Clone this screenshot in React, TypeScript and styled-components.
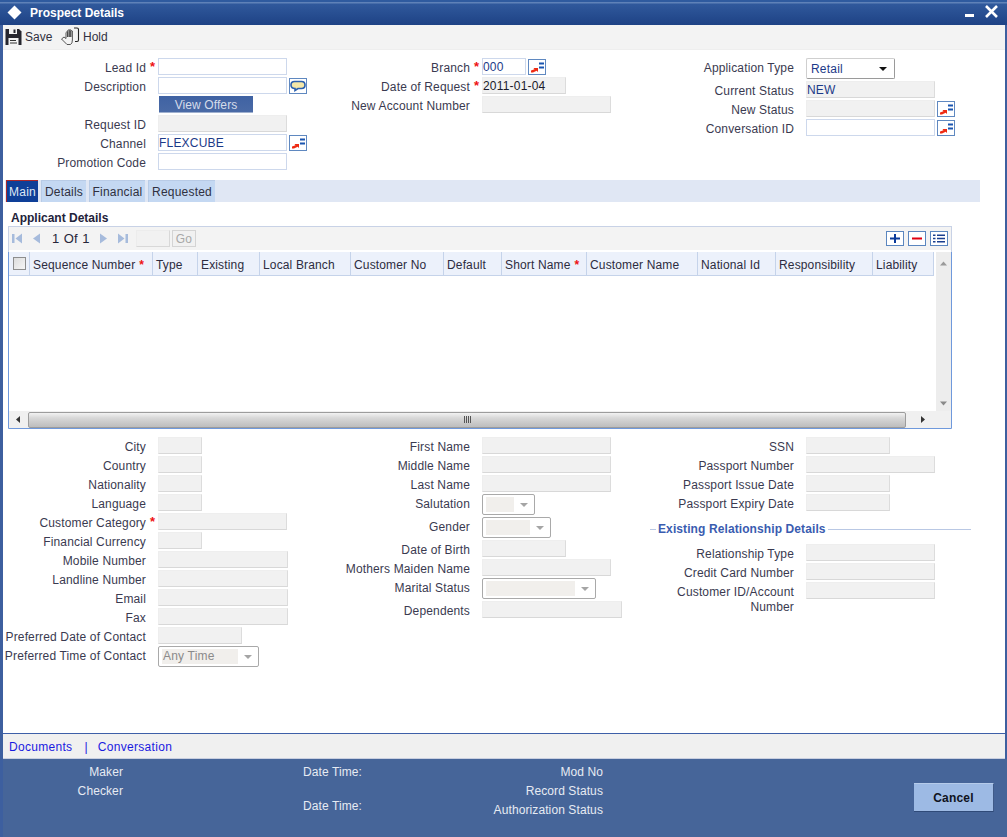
import React from "react";
import styled, { createGlobalStyle } from "styled-components";

const Global = createGlobalStyle`
  html, body { margin: 0; padding: 0; background: #fff; }
  body { font-family: "Liberation Sans", Arial, sans-serif; font-size: 12px; color: #33334a; }
  * { box-sizing: border-box; }
`;

const Frame = styled.div`
  width: 1007px; height: 837px; display: flex; flex-direction: column; overflow: hidden;
  background: #fff;
`;
const TitleBar = styled.header`
  height: 25px; flex: none; display: flex; align-items: center; padding: 0 8px 0 7px;
  background: linear-gradient(#2f5b9f 0, #2f5b9f 2px, #5f82b8 2px, #5f82b8 3px, #30599c 4px, #1e4285 100%);
  color: #fff; font-weight: bold; font-size: 12px; gap: 8px;
`;
const TitleText = styled.span`flex: 1; padding-top: 1px;`;
const Body = styled.div`
  flex: 1; display: flex; flex-direction: column; min-height: 0;
  border-left: 3px solid #3d5f9f; border-right: 2px solid #3d5f9f;
`;
const Toolbar = styled.div`
  height: 25px; flex: none; display: flex; align-items: center; background: #f3f3f3;
  border-bottom: 1px solid #eeeeee; padding-left: 2px; font-size: 12px; color: #303040;
`;
const ToolButton = styled.span<{ $w: number }>`
  display: flex; align-items: center; gap: 3px; width: ${p => p.$w}px;
`;
const FormGrid = styled.div<{ $top: number; $h?: number }>`
  display: grid; grid-template-columns: 323px 324px 1fr; padding-top: ${p => p.$top}px;
  ${p => (p.$h ? `height: ${p.$h}px;` : "")} flex: none;
`;
const Col = styled.div`display: flex; flex-direction: column;`;
const Row = styled.div<{ $h?: number }>`
  display: flex; align-items: flex-start; height: ${p => p.$h ?? 19}px; flex: none;
`;
const Label = styled.label<{ $w: number }>`
  width: ${p => p.$w}px; flex: none; text-align: right; line-height: 17px; white-space: nowrap; padding-top: 2px;
  color: #3a3a50; letter-spacing: 0.15px;
`;
const WrapLabel = styled(Label)`white-space: normal; line-height: 15px; padding-top: 3px;`;
const Star = styled.span<{ $w: number }>`
  width: ${p => p.$w}px; flex: none; color: #ee1111; text-align: left; padding-left: 4px;
  font-size: 13px; font-weight: bold; line-height: 18px;
`;
const Field = styled.input<{ $w: number; $off?: boolean; $dark?: boolean }>`
  width: ${p => p.$w}px; height: 17px; flex: none; margin: 0; padding: 0; outline: none;
  font: 12px "Liberation Sans", Arial, sans-serif; letter-spacing: 0.2px;
  color: ${p => (p.$dark ? "#1a1a2a" : "#1c3a88")};
  background: ${p => (p.$off ? "#f1f1f1" : "#fff")};
  border: 1px solid ${p => (p.$off ? "#eeeeee" : "#cdd8ec")};
  ${p => (p.$off ? "border-right-color: #dcdcdc; border-bottom-color: #d8d8d8;" : "")}
`;
const OfferButton = styled.button`
  width: 94px; height: 17px; margin: 0 0 0 1px; padding: 1px 0 0; border: 0; border-bottom: 1px solid #9fb0cf;
  background: linear-gradient(#3f62a3, #4a6aa6); color: #d5dcea; font: 12px "Liberation Sans", Arial, sans-serif;
  letter-spacing: 0.1px;
`;
const SideButton = styled.button`
  width: 18px; height: 16px; margin: 1px 0 0 2px; padding: 0; display: flex; align-items: center; justify-content: center;
  background: #fff; border: 1px solid #5f88c0;
`;
const SelectBox = styled.div<{ $w: number; $live?: boolean }>`
  width: ${p => p.$w}px; height: 21px; flex: none; display: flex; align-items: center; padding: 2px 0 2px ${p => (p.$live ? 4 : 3)}px;
  border: 1px solid ${p => (p.$live ? "#cfcfcf" : "#a9a9a9")}; border-radius: 2px; background: #fff;
  ${p => (p.$live ? "border-right-color:#9a9a9a; border-bottom-color:#9a9a9a; color:#1c3a88;" : "")}
  letter-spacing: 0.2px;
`;
const SelectFill = styled.div`
  flex: 1; height: 15px; background: #f1efec; color: #8a8a8a; line-height: 15px; padding-left: 1px;
`;
const SelectText = styled.div`flex: 1; line-height: 15px; padding-top: 2px;`;
const Caret = styled.i<{ $dark?: boolean }>`
  width: 0; height: 0; margin: 0 ${p => (p.$dark ? 7 : 6)}px 0 ${p => (p.$dark ? 0 : 6)}px;
  border-left: 4px solid transparent; border-right: 4px solid transparent;
  border-top: 4px solid ${p => (p.$dark ? "#111" : "#a5a5a5")};
`;
const TabStrip = styled.nav`
  flex: none; height: 22px; margin: 1px 0 0 2px; width: 975px; display: flex; gap: 3px; background: #e0e7f4;
  padding-left: 1px;
`;
const Tab = styled.a<{ $w: number; $active?: boolean }>`
  width: ${p => p.$w}px; height: 22px; display: block; text-align: center; line-height: 22px; letter-spacing: 0.2px;
  background: ${p => (p.$active ? "#0e3f98" : "#c4d8f2")};
  color: ${p => (p.$active ? "#dfe8f5" : "#2f3040")};
  border-top: 1px solid ${p => (p.$active ? "#a8282c" : "#b8cbe6")};
  border-left: 1px solid ${p => (p.$active ? "#a8282c" : "#b8cbe6")};
`;
const SectionTitle = styled.h3`
  margin: 9px 0 0 8px; height: 14px; font-size: 12px; line-height: 15px; font-weight: bold; color: #22223a; flex: none;
`;
const Panel = styled.section`
  margin: 1px 0 0 5px; width: 944px; flex: none; display: flex; flex-direction: column;
  border: 1px solid #c8d2e6; border-bottom: 1px solid #6f99dc;
`;
const PagerBar = styled.div`
  height: 23px; flex: none; background: #f3f3f3; display: flex; align-items: center; padding-left: 2px; margin-bottom: 2px;
`;
const PagerIcon = styled.span<{ $ml?: number }>`
  display: flex; margin-left: ${p => p.$ml ?? 0}px;
`;
const PagerText = styled.span`
  width: 37px; margin-left: 9px; font-size: 13px; word-spacing: 1px; color: #26263a; white-space: nowrap;
`;
const PagerInput = styled.input`
  width: 34px; height: 17px; margin: 0 2px 0 7px; padding: 0; background: #f1f1f1; border: 1px solid #ececec;
  border-bottom-color: #d8d8d8; border-right-color: #d8d8d8;
`;
const GoButton = styled.button`
  width: 24px; height: 17px; padding: 0; background: #f1f1f1; border: 1px solid #d4d4d4; color: #a8a8a8;
  font: 12px "Liberation Sans", Arial, sans-serif; letter-spacing: 0.2px;
`;
const PagerActions = styled.div`margin-left: auto; display: flex; gap: 4px; padding-right: 3px;`;
const ActionButton = styled.button`
  width: 18px; height: 15px; padding: 0; display: flex; align-items: center; justify-content: center;
  background: #fff; border: 1px solid #5b86bf;
`;
const GridArea = styled.div`
  display: flex; height: 159px; flex: none; margin: 0 -1px; border-right: 1px solid #6f99dc; border-left: 1px solid #6f99dc;
`;
const GridMain = styled.div`flex: 1; min-width: 0; background: #fff;`;
const HeaderRow = styled.div`
  display: flex; height: 24px; width: 925px; background: #ecf1fb; border-bottom: 1px solid #c5d3ea;
`;
const HeaderCell = styled.div<{ $w: number }>`
  width: ${p => p.$w}px; flex: none; padding-left: 3px; line-height: 26px; white-space: nowrap; letter-spacing: 0.15px;
  border-right: 1px solid #c5d3ea; color: #2c2c40;
`;
const CheckCell = styled.div`
  width: 21px; flex: none; display: flex; align-items: center; justify-content: center; border-right: 1px solid #c5d3ea;
`;
const CheckBox = styled.input`
  width: 13px; height: 13px; margin: 0; appearance: none; background: linear-gradient(135deg, #dcdcdc, #f6f6f6);
  border: 1px solid #8d8d8d;
`;
const HeaderStar = styled.span`color: #ee1111; font-weight: bold; margin-left: 4px;`;
const VScroll = styled.div`
  width: 15px; flex: none; background: #ededed; display: flex; flex-direction: column; justify-content: space-between;
  align-items: center; padding: 8px 0 4px;
`;
const HScroll = styled.div`
  height: 17px; flex: none; margin: 0 -1px; background: #f0f0f0; display: flex; align-items: center;
  border-left: 1px solid #6f99dc; border-right: 1px solid #6f99dc;
`;
const HLeft = styled.div`width: 19px; flex: none; display: flex; justify-content: center;`;
const HThumb = styled.div`
  width: 878px; height: 16px; flex: none; display: flex; align-items: center; justify-content: center; gap: 1px;
  background: linear-gradient(#f2f2f2, #d8d8d8 35%, #bdbdbd 100%); border: 1px solid #9c9c9c; border-radius: 2px;
`;
const Grip = styled.i`width: 1px; height: 7px; background: #555;`;
const HRight = styled.div`flex: 1; display: flex; justify-content: flex-end; padding-right: 25px;`;
const Spacer = styled.div`flex: 1;`;
const LegendRow = styled.div`
  width: 321px; height: 22px; margin: 5px 0 4px; display: flex; align-items: center; gap: 2px; flex: none;
`;
const LegendLine = styled.i<{ $grow?: boolean }>`
  height: 1px; background: #b9c8e4; ${p => (p.$grow ? "flex: 1;" : "width: 6px;")}
`;
const LegendText = styled.span`
  color: #3a5cb0; font-weight: bold; letter-spacing: 0.1px;
`;
const LinkBar = styled.div`
  height: 26px; flex: none; background: #f0f0f0; border-top: 1px solid #3d5fa8; border-bottom: 1px solid #c9cfe0;
  display: flex; align-items: center; padding: 1px 0 0 6px; color: #1a1ae0; letter-spacing: 0.3px;
`;
const FooterLink = styled.a``;
const LinkSep = styled.span`margin: 0 10px 0 12px;`;
const Footer = styled.footer`
  height: 78px; flex: none; background: #466599; color: #e6ebf3; display: flex; border-left: 3px solid #3d5f9f; letter-spacing: 0.1px;
`;
const AuditCol = styled.div<{ $w: number; $ml: number; $right?: boolean }>`
  width: ${p => p.$w}px; margin-left: ${p => p.$ml}px; padding-top: 4px; display: flex; flex-direction: column;
  ${p => (p.$right ? "text-align: right;" : "")}
`;
const AuditItem = styled.div<{ $mt?: number }>`height: 19px; line-height: 19px; margin-top: ${p => p.$mt ?? 0}px;`;
const CancelButton = styled.button`
  width: 80px; height: 29px; margin: 24px 0 0 311px; padding: 0; border: 0; background: #9dbae4; color: #0f1320;
  font: bold 12px "Liberation Sans", Arial, sans-serif; border-top: 1px solid #b5cbea; border-bottom: 1px solid #2f4a78; border-right: 1px solid #3f5a88;
  letter-spacing: 0.2px;
`;

const Lov = () => (
  <svg width="16" height="14" viewBox="0 0 16 14">
    <path d="M2 12.5 V10.5 L5.5 9.3 L4.5 8 H9 V12 L7.7 10.8 L4 12.5 Z" fill="#ee2a12" />
    <rect x="10" y="2.5" width="5" height="2" fill="#1a55b0" />
    <rect x="10" y="6.5" width="5" height="2" fill="#1a55b0" />
  </svg>
);
const Bubble = () => (
  <svg width="16" height="14" viewBox="0 0 16 14">
    <path d="M4.5 2.5 H11.5 Q15 2.5 15 6 Q15 9.5 11.5 9.5 H8 L5 11.5 V9.5 Q1 9.5 1 6 Q1 2.5 4.5 2.5 Z" fill="#f4e7a8" stroke="#2a5fae" strokeWidth="1.6" />
  </svg>
);
const Floppy = () => (
  <svg width="17" height="18" viewBox="0 0 17 18">
    <path d="M0.5 1 H14 L16.5 3.5 V17 H0.5 Z" fill="#26262e" />
    <rect x="4" y="1" width="8" height="5" fill="#f3f3f3" />
    <rect x="8.5" y="1.5" width="2" height="3.5" fill="#26262e" />
    <rect x="3.5" y="10" width="10" height="7" fill="#f3f3f3" />
    <rect x="5" y="12" width="6" height="1" fill="#333" />
    <rect x="5" y="14.5" width="7" height="1" fill="#333" />
  </svg>
);
const HandIcon = () => (
  <svg width="19" height="20" viewBox="0 0 19 20" fill="none" stroke="#444" strokeWidth="0.9" strokeLinejoin="round">
    <path d="M0.5 12 L3 10 L5 11.5 V5.5 Q5.7 4.3 6.6 5.5 V10 V3.5 Q7.3 2.3 8.2 3.5 V10 V3 Q9 1.8 9.8 3 V10 V4 Q10.5 3 11.4 4 V13 Q11.4 16.5 9.5 17.5 H6 L0.5 12 Z" />
    <path d="M13 1 H16 Q17.5 1 17.5 2.5 V13 Q17.5 14.5 16 14.5 H14" strokeWidth="1.1" stroke="#222" />
  </svg>
);
const Pager = ({ d }: { d: string }) => (
  <svg width="13" height="13" viewBox="0 0 13 13"><path d={d} fill="#a6bbdc" /></svg>
);
const Arrow = ({ d, c }: { d: string; c: string }) => (
  <svg width="7" height="7" viewBox="0 0 7 7"><path d={d} fill={c} /></svg>
);

type F = {
  label: string; wrap?: boolean; star?: boolean; w?: number; off?: boolean; dark?: boolean; value?: string;
  lov?: boolean; bubble?: boolean; offers?: boolean; select?: number; selectText?: string; live?: boolean;
};

const Line = ({ f, lw, sw }: { f: F; lw: number; sw: number }) => {
  const L = f.wrap ? WrapLabel : Label;
  return (
    <Row $h={f.select ? 23 : f.wrap ? 34 : 19}>
      <L $w={lw}>{f.label}</L>
      <Star $w={sw}>{f.star ? "*" : ""}</Star>
      {f.offers && <OfferButton>View Offers</OfferButton>}
      {f.select && f.live && (
        <SelectBox $w={f.select} $live>
          <SelectText>{f.selectText}</SelectText>
          <Caret $dark />
        </SelectBox>
      )}
      {f.select && !f.live && (
        <SelectBox $w={f.select}>
          <SelectFill>{f.selectText}</SelectFill>
          <Caret />
        </SelectBox>
      )}
      {f.w && <Field $w={f.w} $off={f.off} $dark={f.dark} value={f.value ?? ""} readOnly />}
      {f.lov && <SideButton><Lov /></SideButton>}
      {f.bubble && <SideButton><Bubble /></SideButton>}
    </Row>
  );
};

const topLeft: F[] = [
  { label: "Lead Id", star: true, w: 129 },
  { label: "Description", w: 129, bubble: true },
  { label: "", offers: true },
  { label: "Request ID", w: 129, off: true },
  { label: "Channel", w: 129, value: "FLEXCUBE", lov: true },
  { label: "Promotion Code", w: 129 },
];
const topMid: F[] = [
  { label: "Branch", star: true, w: 44, value: "000", lov: true },
  { label: "Date of Request", star: true, w: 84, off: true, dark: true, value: "2011-01-04" },
  { label: "New Account Number", w: 129, off: true },
];
const topRight: F[] = [
  { label: "Application Type", select: 89, live: true, selectText: "Retail" },
  { label: "Current Status", w: 129, off: true, value: "NEW" },
  { label: "New Status", w: 129, off: true, lov: true },
  { label: "Conversation ID", w: 129, lov: true },
];
const lowLeft: F[] = [
  { label: "City", w: 44, off: true },
  { label: "Country", w: 44, off: true },
  { label: "Nationality", w: 44, off: true },
  { label: "Language", w: 44, off: true },
  { label: "Customer Category", star: true, w: 129, off: true },
  { label: "Financial Currency", w: 44, off: true },
  { label: "Mobile Number", w: 130, off: true },
  { label: "Landline Number", w: 130, off: true },
  { label: "Email", w: 130, off: true },
  { label: "Fax", w: 130, off: true },
  { label: "Preferred Date of Contact", w: 84, off: true },
  { label: "Preferred Time of Contact", select: 101, selectText: "Any Time" },
];
const lowMid: F[] = [
  { label: "First Name", w: 129, off: true },
  { label: "Middle Name", w: 129, off: true },
  { label: "Last Name", w: 129, off: true },
  { label: "Salutation", select: 53 },
  { label: "Gender", select: 69 },
  { label: "Date of Birth", w: 84, off: true },
  { label: "Mothers Maiden Name", w: 129, off: true },
  { label: "Marital Status", select: 114 },
  { label: "Dependents", w: 140, off: true },
];
const lowRightA: F[] = [
  { label: "SSN", w: 84, off: true },
  { label: "Passport Number", w: 129, off: true },
  { label: "Passport Issue Date", w: 84, off: true },
  { label: "Passport Expiry Date", w: 84, off: true },
];
const lowRightB: F[] = [
  { label: "Relationship Type", w: 129, off: true },
  { label: "Credit Card Number", w: 129, off: true },
  { label: "Customer ID/Account Number", w: 129, off: true, wrap: true },
];

const columns: { t: string; w: number; star?: boolean }[] = [
  { t: "Sequence Number", w: 123, star: true },
  { t: "Type", w: 45 },
  { t: "Existing", w: 62 },
  { t: "Local Branch", w: 91 },
  { t: "Customer No", w: 93 },
  { t: "Default", w: 58 },
  { t: "Short Name", w: 85, star: true },
  { t: "Customer Name", w: 111 },
  { t: "National Id", w: 78 },
  { t: "Responsibility", w: 97 },
  { t: "Liability", w: 61 },
];

export default function App() {
  return (
    <Frame>
      <Global />
      <TitleBar>
        <svg width="15" height="15" viewBox="0 0 15 15"><path d="M7.5 0.5 L14.5 7.5 L7.5 14.5 L0.5 7.5 Z" fill="#fff" /></svg>
        <TitleText>Prospect Details</TitleText>
        <svg width="34" height="18" viewBox="0 0 34 18">
          <rect x="0" y="10" width="9" height="3" fill="#fff" />
          <path d="M21 2 L32 13 M32 2 L21 13" stroke="#fff" strokeWidth="2.6" />
        </svg>
      </TitleBar>
      <Body>
        <Toolbar>
          <ToolButton $w={56}><Floppy />Save</ToolButton>
          <ToolButton $w={60}><HandIcon />Hold</ToolButton>
        </Toolbar>
        <FormGrid $top={8} $h={129}>
          <Col>{topLeft.map((f, i) => <Line key={i} f={f} lw={143} sw={12} />)}</Col>
          <Col>{topMid.map((f, i) => <Line key={i} f={f} lw={144} sw={12} />)}</Col>
          <Col>{topRight.map((f, i) => <Line key={i} f={f} lw={144} sw={12} />)}</Col>
        </FormGrid>
        <TabStrip>
          <Tab $w={32} $active>Main</Tab>
          <Tab $w={45}>Details</Tab>
          <Tab $w={56}>Financial</Tab>
          <Tab $w={67}>Requested</Tab>
        </TabStrip>
        <SectionTitle>Applicant Details</SectionTitle>
        <Panel>
          <PagerBar>
            <PagerIcon><Pager d="M1 2 H3.5 V11 H1 Z M11 1.5 V11.5 L4.5 6.5 Z" /></PagerIcon>
            <PagerIcon $ml={6}><Pager d="M10 1.5 V11.5 L3 6.5 Z" /></PagerIcon>
            <PagerText>1 Of 1</PagerText>
            <PagerIcon $ml={8}><Pager d="M3 1.5 V11.5 L10 6.5 Z" /></PagerIcon>
            <PagerIcon $ml={6}><Pager d="M2 1.5 V11.5 L8.5 6.5 Z M9.5 2 H12 V11 H9.5 Z" /></PagerIcon>
            <PagerInput readOnly />
            <GoButton>Go</GoButton>
            <PagerActions>
              <ActionButton>
                <svg width="12" height="11" viewBox="0 0 12 11"><path d="M1 4.5 H11 V6.5 H1 Z M5 1 H7 V10 H5 Z" fill="#0a3a9a" /></svg>
              </ActionButton>
              <ActionButton>
                <svg width="12" height="11" viewBox="0 0 12 11"><rect x="1" y="4.5" width="10" height="2" fill="#e00010" /></svg>
              </ActionButton>
              <ActionButton>
                <svg width="14" height="11" viewBox="0 0 14 11"><path d="M1 1.5 H3.5 V3 H1 Z M5 1.5 H13 V3 H5 Z M1 4.7 H3.5 V6.2 H1 Z M5 4.7 H13 V6.2 H5 Z M1 8 H3.5 V9.5 H1 Z M5 8 H13 V9.5 H5 Z" fill="#1a3f8f" /></svg>
              </ActionButton>
            </PagerActions>
          </PagerBar>
          <GridArea>
            <GridMain>
              <HeaderRow>
                <CheckCell><CheckBox type="checkbox" readOnly /></CheckCell>
                {columns.map(c => (
                  <HeaderCell key={c.t} $w={c.w}>{c.t}{c.star && <HeaderStar>*</HeaderStar>}</HeaderCell>
                ))}
              </HeaderRow>
            </GridMain>
            <VScroll>
              <Arrow d="M3.5 1.5 L7 5.5 H0 Z" c="#9a9a9a" />
              <Arrow d="M0 1.5 H7 L3.5 5.5 Z" c="#8a8a8a" />
            </VScroll>
          </GridArea>
          <HScroll>
            <HLeft><Arrow d="M5 0 V7 L1 3.5 Z" c="#333" /></HLeft>
            <HThumb><Grip /><Grip /><Grip /><Grip /></HThumb>
            <HRight><Arrow d="M2 0 V7 L6 3.5 Z" c="#333" /></HRight>
          </HScroll>
        </Panel>
        <FormGrid $top={8}>
          <Col>{lowLeft.map((f, i) => <Line key={i} f={f} lw={143} sw={12} />)}</Col>
          <Col>{lowMid.map((f, i) => <Line key={i} f={f} lw={144} sw={12} />)}</Col>
          <Col>
            {lowRightA.map((f, i) => <Line key={i} f={f} lw={144} sw={12} />)}
            <LegendRow>
              <LegendLine />
              <LegendText>Existing Relationship Details</LegendText>
              <LegendLine $grow />
            </LegendRow>
            {lowRightB.map((f, i) => <Line key={i} f={f} lw={144} sw={12} />)}
          </Col>
        </FormGrid>
        <Spacer />
        <LinkBar>
          <FooterLink>Documents</FooterLink>
          <LinkSep>|</LinkSep>
          <FooterLink>Conversation</FooterLink>
        </LinkBar>
      </Body>
      <Footer>
        <AuditCol $w={120} $ml={0} $right>
          <AuditItem>Maker</AuditItem>
          <AuditItem>Checker</AuditItem>
        </AuditCol>
        <AuditCol $w={100} $ml={180}>
          <AuditItem>Date Time:</AuditItem>
          <AuditItem $mt={15}>Date Time:</AuditItem>
        </AuditCol>
        <AuditCol $w={200} $ml={0} $right>
          <AuditItem>Mod No</AuditItem>
          <AuditItem>Record Status</AuditItem>
          <AuditItem>Authorization Status</AuditItem>
        </AuditCol>
        <CancelButton>Cancel</CancelButton>
      </Footer>
    </Frame>
  );
}
